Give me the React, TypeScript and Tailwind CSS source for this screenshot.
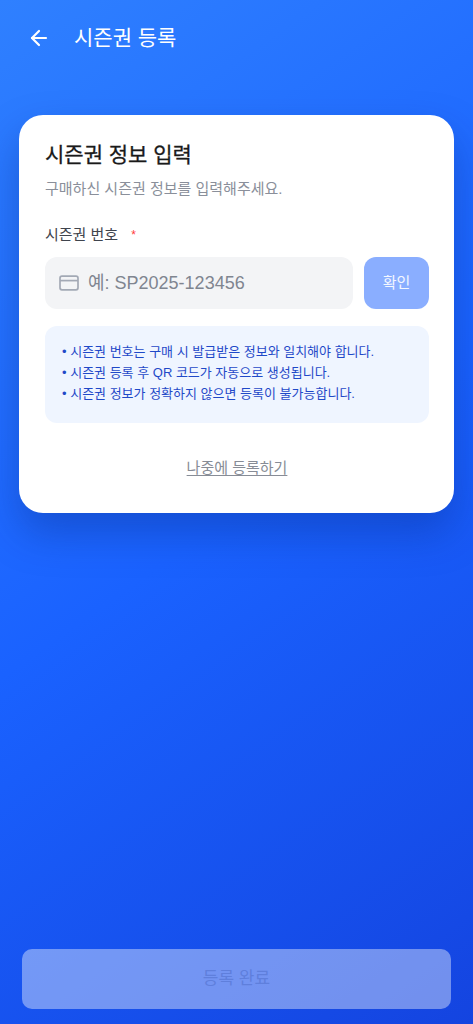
import { ArrowLeft } from "lucide-react";

const notices = [
  "시즌권 번호는 구매 시 발급받은 정보와 일치해야 합니다.",
  "시즌권 등록 후 QR 코드가 자동으로 생성됩니다.",
  "시즌권 정보가 정확하지 않으면 등록이 불가능합니다.",
];

export default function App() {
  return (
    <div className="h-[1024px] w-full flex flex-col overflow-hidden bg-[linear-gradient(145deg,#2f80ff_0%,#1a62ff_50%,#1444e0_100%)] font-['Liberation_Sans','Noto_Sans_CJK_KR',sans-serif]">
      <header className="h-[76px] pl-[27px] flex items-center shrink-0">
        <ArrowLeft className="w-6 h-6 text-white" strokeWidth={2.2} />
        <h1 className="ml-[23px] text-[21px] font-normal text-white">시즌권 등록</h1>
      </header>

      <main className="mt-[39px] mx-[19px] h-[398px] rounded-[24px] bg-white pl-[26px] pr-[25px] pt-[26px] shadow-[0_20px_40px_rgba(8,40,130,0.35)]">
        <h2 className="text-[21px] leading-[28px] font-normal text-[#1a1a1a] [-webkit-text-stroke:0.3px_#1a1a1a]">시즌권 정보 입력</h2>
        <p className="mt-[10px] text-[15px] leading-[20px] text-[#8a8f9a]">구매하신 시즌권 정보를 입력해주세요.</p>

        <label className="mt-[26px] flex items-center text-[15px] leading-[20px] text-[#3f444d]">
          시즌권 번호
          <span className="ml-[13px] text-[12px] text-[#ff3b3b]">*</span>
        </label>

        <div className="mt-[12px] flex gap-[11px]">
          <div className="flex-1 h-[52px] rounded-[12px] bg-[#f3f4f6] flex items-center pl-[14px] gap-[9px]">
            <svg width="20" height="16" viewBox="0 0 20 16" fill="none" stroke="#a3a9b5" strokeWidth="1.7">
              <rect x="1" y="1.2" width="18" height="13.6" rx="2" />
              <path d="M1 5.6h18" />
            </svg>
            <span className="text-[18px] text-[#7f8590]">예: SP2025-123456</span>
          </div>
          <button className="w-[65px] h-[52px] rounded-[12px] bg-[#8aaeff] text-[15px] text-white/90">확인</button>
        </div>

        <ul className="mt-[17px] h-[97px] rounded-[12px] bg-[#eff5ff] pl-[17px] pt-[15px] text-[13px] leading-[21px] text-[#1f49c8]">
          {notices.map((n) => (
            <li key={n}>• {n}</li>
          ))}
        </ul>

        <div className="mt-[33px] text-center">
          <button className="text-[15px] leading-[20px] text-[#878c96] underline underline-offset-2">나중에 등록하기</button>
        </div>
      </main>

      <div className="mt-auto mb-[15px] mx-[22px]">
        <button className="w-full h-[60px] rounded-[10px] bg-white/40 text-[17px] font-normal text-[#5f7fdc]">등록 완료</button>
      </div>
    </div>
  );
}
